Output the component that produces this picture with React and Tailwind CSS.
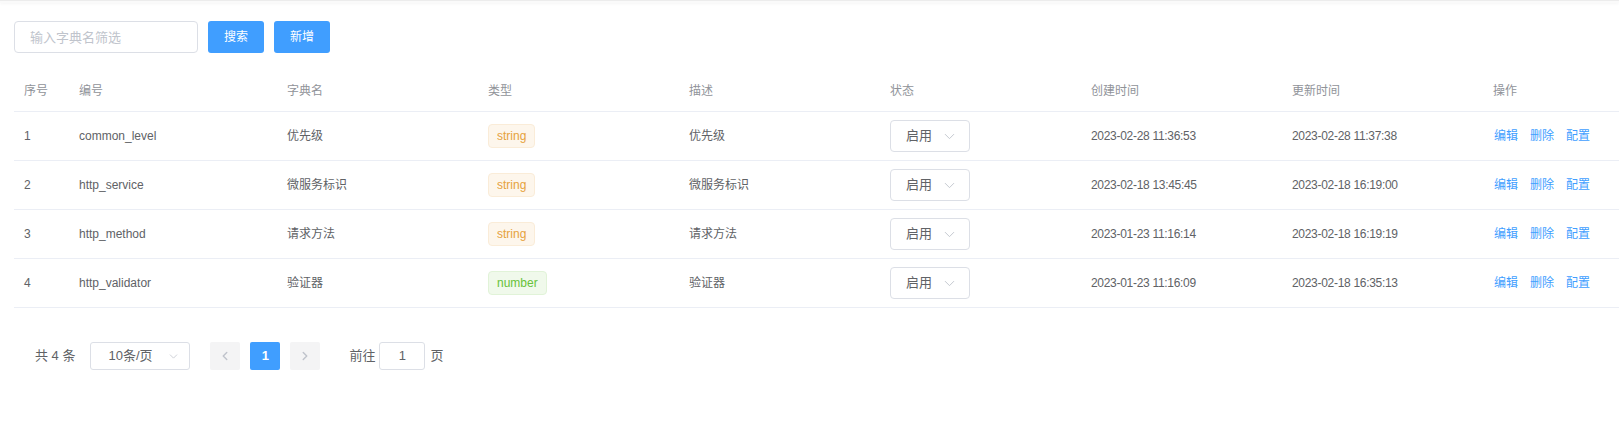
import { ChevronDown, ChevronLeft, ChevronRight } from 'lucide-react';

const rows = [
    { id: 1, code: 'common_level', name: '优先级', type: 'string', desc: '优先级', created: '2023-02-28 11:36:53', updated: '2023-02-28 11:37:38' },
    { id: 2, code: 'http_service', name: '微服务标识', type: 'string', desc: '微服务标识', created: '2023-02-18 13:45:45', updated: '2023-02-18 16:19:00' },
    { id: 3, code: 'http_method', name: '请求方法', type: 'string', desc: '请求方法', created: '2023-01-23 11:16:14', updated: '2023-02-18 16:19:19' },
    { id: 4, code: 'http_validator', name: '验证器', type: 'number', desc: '验证器', created: '2023-01-23 11:16:09', updated: '2023-02-18 16:35:13' },
];

const headers = ['序号', '编号', '字典名', '类型', '描述', '状态', '创建时间', '更新时间', '操作'];

const cols = 'grid grid-cols-[55px_208px_201px_201px_201px_201px_201px_201px_1fr]';

function TypeTag({ type }) {
    const cls = type === 'number'
        ? 'bg-[#f0f9eb] border-[#e1f3d8] text-[#67c23a]'
        : 'bg-[#fdf6ec] border-[#faecd8] text-[#e6a23c]';
    return (
        <span className={`inline-flex h-[24px] items-center rounded-[4px] border px-[8px] text-[12px] ${cls}`}>
            {type}
        </span>
    );
}

function StatusSelect() {
    return (
        <div className="flex h-[32px] w-[80px] items-center justify-between rounded-[4px] border border-[#dcdfe6] pl-[15px] pr-[11px] text-[13px] text-[#606266]">
            <span>启用</span>
            <ChevronDown size={17} strokeWidth={1.3} className="text-[#c0c4cc]" />
        </div>
    );
}

export default function App() {
    return (
        <div className="min-h-screen bg-white font-['Liberation_Sans','Noto_Sans_CJK_SC',sans-serif] text-[#606266]">
            <div className="h-[3px] border-t border-[#ececec] bg-[#fafafa] shadow-[0_1px_3px_rgba(0,0,0,0.04)]" />

            <div className="pl-[14px]">
                <div className="flex items-center gap-[10px] pt-[18px]">
                    <input
                        placeholder="输入字典名筛选"
                        className="h-[32px] w-[184px] rounded-[4px] border border-[#dcdfe6] px-[15px] text-[13px] text-[#606266] outline-none placeholder:text-[#c0c4cc]"
                    />
                    <button className="h-[32px] w-[56px] rounded-[3px] bg-[#409eff] text-[12px] text-white">搜索</button>
                    <button className="h-[32px] w-[56px] rounded-[3px] bg-[#409eff] text-[12px] text-white">新增</button>
                </div>

                <div className="mt-[18px] text-[12px]">
                    <div className={`${cols} h-[41px] items-center border-b border-[#ebeef5] text-[#909399]`}>
                        {headers.map((h) => (
                            <div key={h} className="pl-[10px]">{h}</div>
                        ))}
                    </div>
                    {rows.map((r) => (
                        <div key={r.id} className={`${cols} h-[49px] items-center border-b border-[#ebeef5]`}>
                            <div className="pl-[10px]">{r.id}</div>
                            <div className="pl-[10px]">{r.code}</div>
                            <div className="pl-[10px]">{r.name}</div>
                            <div className="pl-[10px]"><TypeTag type={r.type} /></div>
                            <div className="pl-[10px]">{r.desc}</div>
                            <div className="pl-[10px]"><StatusSelect /></div>
                            <div className="pl-[10px] tracking-[-0.3px]">{r.created}</div>
                            <div className="pl-[10px] tracking-[-0.3px]">{r.updated}</div>
                            <div className="flex gap-[12px] pl-[11px] text-[#409eff]">
                                <span>编辑</span>
                                <span>删除</span>
                                <span>配置</span>
                            </div>
                        </div>
                    ))}
                </div>

                <div className="mt-[34px] flex h-[28px] items-center text-[13px] text-[#606266]">
                    <span className="ml-[21px]">共 4 条</span>
                    <div className="ml-[15px] flex h-[28px] w-[100px] items-center justify-between rounded-[3px] border border-[#dcdfe6] pl-[17px] pr-[9px]">
                        <span>10条/页</span>
                        <ChevronDown size={13} strokeWidth={1.4} className="text-[#c0c4cc]" />
                    </div>
                    <div className="ml-[20px] flex h-[28px] w-[30px] items-center justify-center rounded-[2px] bg-[#f4f4f5] text-[#c0c4cc]">
                        <ChevronLeft size={14} strokeWidth={2.5} />
                    </div>
                    <div className="ml-[10px] flex h-[28px] w-[30px] items-center justify-center rounded-[2px] bg-[#409eff] font-bold text-white">1</div>
                    <div className="ml-[10px] flex h-[28px] w-[30px] items-center justify-center rounded-[2px] bg-[#f4f4f5] text-[#c0c4cc]">
                        <ChevronRight size={14} strokeWidth={2.5} />
                    </div>
                    <span className="ml-[29px]">前往</span>
                    <div className="ml-[4px] flex h-[28px] w-[46px] items-center justify-center rounded-[3px] border border-[#dcdfe6]">1</div>
                    <span className="ml-[5px]">页</span>
                </div>
            </div>
        </div>
    );
}
